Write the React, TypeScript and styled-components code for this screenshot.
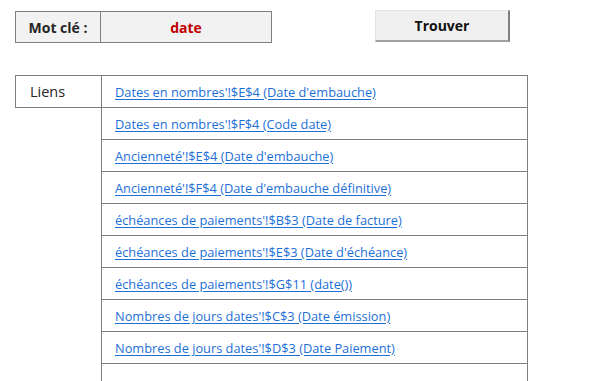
import React, { FC } from "react";
import styled, { createGlobalStyle } from "styled-components";

//styles
const GlobalStyle = createGlobalStyle`
    html, body {
        margin: 0;
        padding: 0;
        background: #ffffff;
        font-family: "Open Sans", "Liberation Sans", sans-serif;
    }
`
const Page = styled.div`
    display: flex;
    flex-direction: column;
    padding: 11px 0 0 15px;
    width: 600px;
    height: 381px;
    box-sizing: border-box;
    overflow: hidden;
`
const TopBar = styled.div`
    display: flex;
    flex-direction: row;
    align-items: flex-start;
`
const SearchBox = styled.div`
    display: grid;
    grid-template-columns: 85px 170px;
    height: 32px;
    border: 1px solid #7f7f7f;
    background: #f2f2f2;
    box-sizing: border-box;
`
const SearchLabel = styled.div`
    display: flex;
    align-items: center;
    justify-content: center;
    border-right: 1px solid #7f7f7f;
    font-weight: 700;
    font-size: 14px;
    color: #262626;
`
const SearchValue = styled.div`
    display: flex;
    align-items: center;
    justify-content: center;
    font-weight: 700;
    font-size: 14px;
    color: #c00000;
`
const FindButton = styled.div`
    display: flex;
    align-items: center;
    justify-content: center;
    margin: -1px 0 0 103px;
    width: 135px;
    height: 32px;
    box-sizing: border-box;
    background: #f0f0f0;
    border-top: 1px solid #e3e3e3;
    border-left: 1px solid #e3e3e3;
    border-right: 2px solid #808080;
    border-bottom: 2px solid #a0a0a0;
    font-weight: 700;
    font-size: 14px;
    color: #111111;
`
const Table = styled.div`
    display: grid;
    grid-template-columns: 86px 427px;
    margin-top: 32px;
`
const HeadCell = styled.div`
    display: flex;
    align-items: center;
    padding-left: 14px;
    height: 33px;
    box-sizing: border-box;
    border: 1px solid #7f7f7f;
    border-right: none;
    font-size: 14.5px;
    color: #262626;
`
const EmptyCell = styled.div`
    height: 32px;
`
const LinkCell = styled.div<{ $first?: boolean }>`
    display: flex;
    align-items: center;
    padding-left: 13px;
    height: ${(p) => (p.$first ? 33 : 32)}px;
    box-sizing: border-box;
    border-left: 1px solid #7f7f7f;
    border-right: 1px solid #7f7f7f;
    border-bottom: 1px solid #7f7f7f;
    border-top: ${(p) => (p.$first ? "1px solid #7f7f7f" : "none")};
    font-size: 12.8px;
`
const Link = styled.a`
    color: #1d6fd6;
    text-decoration: underline;
    text-underline-offset: 2px;
    white-space: nowrap;
    cursor: pointer;
`

const links = [
    "Dates en nombres'!$E$4 (Date d'embauche)",
    "Dates en nombres'!$F$4 (Code date)",
    "Ancienneté'!$E$4 (Date d'embauche)",
    "Ancienneté'!$F$4 (Date d'embauche définitive)",
    "échéances de paiements'!$B$3 (Date de facture)",
    "échéances de paiements'!$E$3 (Date d'échéance)",
    "échéances de paiements'!$G$11 (date())",
    "Nombres de jours dates'!$C$3 (Date émission)",
    "Nombres de jours dates'!$D$3 (Date Paiement)",
    "",
];

const App: FC = () => {
    return (
        <>
            <GlobalStyle />
            <Page>
                <TopBar>
                    <SearchBox>
                        <SearchLabel>Mot clé :</SearchLabel>
                        <SearchValue>date</SearchValue>
                    </SearchBox>
                    <FindButton>Trouver</FindButton>
                </TopBar>
                <Table>
                    {links.map((l, i) => (
                        <React.Fragment key={i}>
                            {i === 0 ? <HeadCell>Liens</HeadCell> : <EmptyCell />}
                            <LinkCell $first={i === 0}>
                                {l && <Link>{l}</Link>}
                            </LinkCell>
                        </React.Fragment>
                    ))}
                </Table>
            </Page>
        </>
    );
}

export default App;
